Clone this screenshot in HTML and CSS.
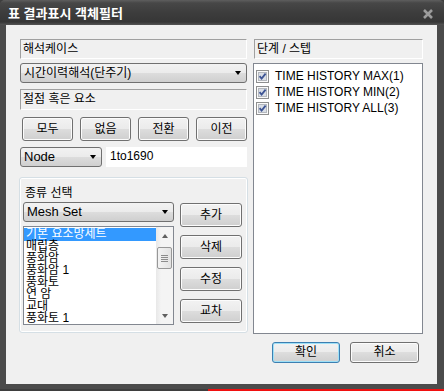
FILE: index.html
```html
<!DOCTYPE html>
<html lang="ko">

<head>
    <meta charset="UTF-8">
    <title>표 결과표시 객체필터</title>
    <link rel="stylesheet" href="styles.css">
</head>

<body>
    <div class="window">
        <!-- Title bar -->
        <div class="titlebar">
            <span class="title">표 결과표시 객체필터</span>
            <svg class="close" width="12" height="10" viewBox="0 0 12 10">
                <path d="M2 1 L10 9 M10 1 L2 9" stroke="#9c9c9c" stroke-width="2.6" />
            </svg>
        </div>

        <div class="client">
            <div class="columns">
                <!-- Left column -->
                <div class="col-left">
                    <div class="static">해석케이스</div>
                    <div class="combo combo-case"><span>시간이력해석(단주기)</span><i class="arrow"></i></div>

                    <div class="static static-tall">절점 혹은 요소</div>
                    <div class="btn-row">
                        <button class="btn">모두</button>
                        <button class="btn">없음</button>
                        <button class="btn">전환</button>
                        <button class="btn">이전</button>
                    </div>

                    <div class="node-row">
                        <div class="combo combo-node latin"><span>Node</span><i class="arrow"></i></div>
                        <div class="textbox">1to1690</div>
                    </div>

                    <!-- Group: 종류 선택 -->
                    <div class="group">
                        <div class="group-title">종류 선택</div>
                        <div class="group-body">
                            <div class="group-main">
                                <div class="combo latin"><span>Mesh Set</span><i class="arrow"></i></div>
                                <div class="listbox">
                                    <ul class="items">
                                        <li class="selected">기본 요소망세트</li>
                                        <li>매립층</li>
                                        <li>풍화암</li>
                                        <li>풍화암 1</li>
                                        <li>풍화토</li>
                                        <li>연 암</li>
                                        <li>교대</li>
                                        <li>풍화토 1</li>
                                    </ul>
                                    <div class="scrollbar">
                                        <div class="sb-btn"><i class="sb-up"></i></div>
                                        <div class="sb-thumb"><i class="grip"></i></div>
                                        <div class="sb-track"></div>
                                        <div class="sb-btn"><i class="sb-down"></i></div>
                                    </div>
                                </div>
                            </div>
                            <div class="group-buttons">
                                <button class="btn">추가</button>
                                <button class="btn">삭제</button>
                                <button class="btn">수정</button>
                                <button class="btn">교차</button>
                            </div>
                        </div>
                    </div>
                </div>

                <!-- Right column -->
                <div class="col-right">
                    <div class="static static-right">단계 / 스텝</div>
                    <div class="checklist">
                        <div class="check-row">
                            <svg class="checkbox" width="13" height="13" viewBox="0 0 13 13">
                                <rect x="0.5" y="0.5" width="12" height="12" fill="#fafafa" stroke="#8e8f8f" />
                                <rect x="2.5" y="2.5" width="8" height="8" fill="#d9dee6" stroke="#b4b8be" />
                                <path d="M3.6 6.2 L5.6 8.6 L9.6 3.6" fill="none" stroke="#3d5494" stroke-width="1.8" />
                            </svg>
                            <span>TIME HISTORY MAX(1)</span>
                        </div>
                        <div class="check-row">
                            <svg class="checkbox" width="13" height="13" viewBox="0 0 13 13">
                                <rect x="0.5" y="0.5" width="12" height="12" fill="#fafafa" stroke="#8e8f8f" />
                                <rect x="2.5" y="2.5" width="8" height="8" fill="#d9dee6" stroke="#b4b8be" />
                                <path d="M3.6 6.2 L5.6 8.6 L9.6 3.6" fill="none" stroke="#3d5494" stroke-width="1.8" />
                            </svg>
                            <span>TIME HISTORY MIN(2)</span>
                        </div>
                        <div class="check-row">
                            <svg class="checkbox" width="13" height="13" viewBox="0 0 13 13">
                                <rect x="0.5" y="0.5" width="12" height="12" fill="#fafafa" stroke="#8e8f8f" />
                                <rect x="2.5" y="2.5" width="8" height="8" fill="#d9dee6" stroke="#b4b8be" />
                                <path d="M3.6 6.2 L5.6 8.6 L9.6 3.6" fill="none" stroke="#3d5494" stroke-width="1.8" />
                            </svg>
                            <span>TIME HISTORY ALL(3)</span>
                        </div>
                    </div>
                </div>
            </div>

            <!-- OK / Cancel -->
            <div class="footer">
                <button class="btn btn-default">확인</button>
                <button class="btn btn-cancel">취소</button>
            </div>
        </div>
    </div>
    <div class="edge"><div class="edge-red"></div></div>
</body>

</html>
```

FILE: styles.css
```css
* {
    box-sizing: border-box;
}

body {
    margin: 0;
    width: 444px;
    height: 391px;
    overflow: hidden;
    background-color: #3e3e3e;
    font-family: "Liberation Sans", "Noto Sans CJK KR", sans-serif;
    font-size: 12px;
    color: #000;
}

.window {
    height: 389px;
    display: flex;
    flex-direction: column;
    padding-bottom: 5px;
    background-color: #4b4b4b;
    border-radius: 5px 5px 0 0;
}

.titlebar {
    height: 25px;
    flex: none;
    display: flex;
    align-items: center;
    padding: 2px 10px 0 8px;
    background: linear-gradient(#5e5e5e, #474747 3px, #3d3d3d 50%, #363636 88%, #555 100%);
    border-radius: 5px 5px 0 0;
}

.title {
    color: white;
    font-weight: bold;
    font-size: 13px;
    line-height: 16px;
}

.close {
    margin-left: auto;
}

.client {
    flex: 1;
    margin: 0 7px 0 6px;
    padding: 14px 14px 0;
    background-color: #f0f0f0;
}

.columns {
    display: flex;
    gap: 6px;
}

.col-left {
    width: 227px;
    display: flex;
    flex-direction: column;
}

.col-right {
    width: 170px;
    display: flex;
    flex-direction: column;
}

/* static text with sunken edge */
.static {
    height: 20px;
    padding-left: 2px;
    line-height: 18px;
    border: 1px solid;
    border-color: #a0a0a0 #fff #fff #a0a0a0;
    white-space: nowrap;
}

.static-tall {
    height: 21px;
    line-height: 19px;
    margin-top: 6px;
}

.static-right {
    margin-left: 1px;
}

.combo {
    height: 20px;
    display: flex;
    align-items: center;
    padding: 0 5px 0 3px;
    line-height: 18px;
    border: 1px solid #707070;
    border-radius: 3px;
    background: linear-gradient(#f2f2f2, #ebebeb 50%, #dddddd 50%, #cfcfcf);
    white-space: nowrap;
}

.combo.latin {
    font-size: 13px;
}

.combo .arrow {
    margin-left: auto;
    width: 0;
    height: 0;
    border-left: 3.5px solid transparent;
    border-right: 3.5px solid transparent;
    border-top: 4px solid #000;
}

.combo-case {
    margin-top: 4px;
}

.btn {
    height: 24px;
    padding: 0;
    font: inherit;
    line-height: 20px;
    color: #000;
    border: 1px solid #707070;
    border-radius: 3px;
    background: linear-gradient(#f2f2f2, #ebebeb 50%, #dddddd 50%, #cfcfcf);
    box-shadow: inset 0 0 0 1px #fcfcfc;
}

.btn-row {
    display: flex;
    justify-content: space-between;
    margin-top: 7px;
    padding-left: 2px;
}

.btn-row .btn {
    width: 51px;
}

.node-row {
    display: flex;
    gap: 4px;
    margin-top: 6px;
}

.combo-node {
    width: 82px;
}

.textbox {
    flex: 1;
    height: 20px;
    padding: 2px 4px;
    line-height: 14px;
    background-color: white;
}

/* group box */
.group {
    height: 156px;
    margin: 10px -1px 0 -1px;
    padding: 6px 3px 0 3px;
    border: 1px solid #d5dfe5;
    border-radius: 3px;
    box-shadow: inset 0 0 0 1px #fff;
}

.group-title {
    padding-left: 2px;
    line-height: 18px;
}

.group-body {
    display: flex;
    gap: 6px;
}

.group-main {
    width: 151px;
    display: flex;
    flex-direction: column;
}

.listbox {
    display: flex;
    height: 99px;
    margin-top: 4px;
    background-color: white;
    border: 1px solid #828790;
}

.items {
    flex: 1;
    list-style: none;
    margin: 0;
    padding: 1px 0 0;
    overflow: hidden;
}

.items li {
    height: 12px;
    line-height: 12px;
    padding-left: 2px;
    white-space: nowrap;
}

.items li.selected {
    height: 13px;
    margin-bottom: -1px;
    background-color: #3399ff;
    color: white;
}

.scrollbar {
    width: 17px;
    display: flex;
    flex-direction: column;
    background: linear-gradient(to right, #e8e8e8, #f4f4f4 30%, #f4f4f4);
}

.sb-btn {
    height: 17px;
    display: flex;
    align-items: center;
    justify-content: center;
}

.sb-up,
.sb-down {
    width: 0;
    height: 0;
    border-left: 3.5px solid transparent;
    border-right: 3.5px solid transparent;
}

.sb-up {
    border-bottom: 4px solid #606060;
}

.sb-down {
    border-top: 4px solid #606060;
}

.sb-thumb {
    height: 22px;
    margin: 3px 1px 0 1px;
    display: flex;
    align-items: center;
    justify-content: center;
    border: 1px solid #979797;
    border-radius: 2px;
    background: linear-gradient(to right, #f3f3f3, #e2e2e2);
}

.grip {
    width: 7px;
    height: 7px;
    background: repeating-linear-gradient(#8c8c8c 0 1px, transparent 1px 2px);
}

.sb-track {
    flex: 1;
}

.group-buttons {
    display: flex;
    flex-direction: column;
    gap: 8px;
    margin-top: 1px;
}

.group-buttons .btn {
    width: 62px;
}

/* step list */
.checklist {
    height: 271px;
    margin-top: 4px;
    padding: 4px 0 0 2px;
    background-color: white;
    border: 1px solid #828790;
}

.check-row {
    height: 16px;
    display: flex;
    align-items: center;
    gap: 6px;
    white-space: nowrap;
}

.checkbox {
    flex: none;
}

.footer {
    display: flex;
    justify-content: flex-end;
    gap: 10px;
    margin-top: 8px;
    padding-right: 4px;
}

.footer .btn {
    height: 21px;
    line-height: 17px;
}

.btn-default {
    width: 68px;
    border-color: #3c7fb1;
    box-shadow: inset 0 0 0 1px #9ee0f7;
}

.btn-cancel {
    width: 69px;
}

.edge {
    height: 2px;
    padding-left: 208px;
}

.edge-red {
    height: 2px;
    background-color: #f01010;
}
```
